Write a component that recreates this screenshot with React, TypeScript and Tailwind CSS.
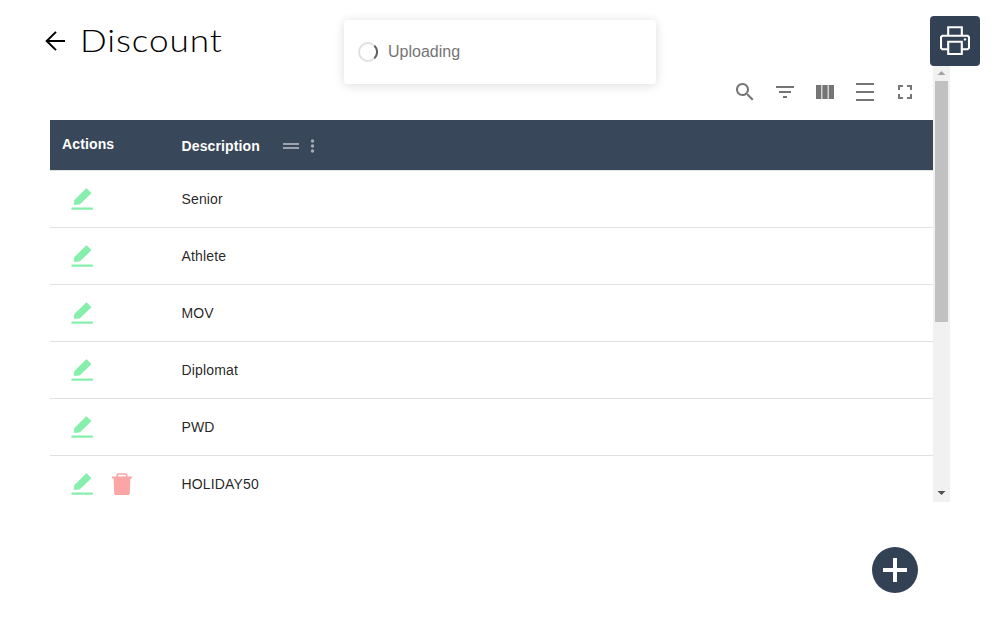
import React from "react";

const toolbarIcons = [
  "M15.5 14h-.79l-.28-.27C15.41 12.59 16 11.11 16 9.5 16 5.91 13.09 3 9.5 3S3 5.91 3 9.5 5.91 16 9.5 16c1.61 0 3.09-.59 4.23-1.57l.27.28v.79l5 4.99L20.49 19l-4.99-5zm-6 0C7.01 14 5 11.99 5 9.5S7.01 5 9.5 5 14 7.01 14 9.5 11.99 14 9.5 14z",
  "M10 18h4v-2h-4v2zM3 6v2h18V6H3zm3 7h12v-2H6v2z",
  "M14.67 5v14H9.33V5h5.34zm1 14H21V5h-5.33v14zm-7.34 0V5H3v14h5.33z",
  "M3 3h18v2H3zm0 16h18v2H3zm0-8h18v2H3z",
  "M7 14H5v5h5v-2H7v-3zm-2-4h2V7h3V5H5v5zm12 7h-3v2h5v-5h-2v3zM14 5v2h3v3h2V5h-5z",
];

const rows = [
  { name: "Senior", removable: false },
  { name: "Athlete", removable: false },
  { name: "MOV", removable: false },
  { name: "Diplomat", removable: false },
  { name: "PWD", removable: false },
  { name: "HOLIDAY50", removable: true },
];

function EditIcon() {
  return (
    <svg width="22" height="24" viewBox="0 0 22 24" className="text-[#86efac]" fill="currentColor">
      <path d="M4 12.8 15.4 1.6 20.1 6.2 8.7 17 3.4 17.6 3.4 14z" stroke="currentColor" strokeWidth="0.8" strokeLinejoin="round" />
      <rect x="0.3" y="20.6" width="21.7" height="2.2" rx="0.8" />
    </svg>
  );
}

function TrashIcon() {
  return (
    <svg width="20" height="24" viewBox="0 0 20 24" className="text-[#fca5a5]" fill="currentColor">
      <path d="M5.3 5V3Q5.3 2 6.3 2H13.7Q14.7 2 14.7 3V5" fill="none" stroke="currentColor" strokeWidth="1.7" />
      <rect x="0" y="4.6" width="20" height="2" rx="0.4" />
      <path d="M1.6 6H18.4L17.8 21.2Q17.7 22.9 16 22.9H4Q2.3 22.9 2.2 21.2z" />
    </svg>
  );
}

function PrinterIcon() {
  return (
    <svg width="30" height="30" viewBox="0 0 30 30" fill="none" stroke="currentColor" strokeWidth="2.1">
      <path d="M8.2 9.5V1.3H21.8V9.5" />
      <path d="M8.2 23.3H2.4L1 21.9V11.1L2.4 9.7H27.6L29 11.1V21.9L27.6 23.3H21.8" />
      <path d="M8.2 15.7H21.8V28H8.2z" />
      <circle cx="25" cy="13.4" r="1.2" fill="currentColor" stroke="none" />
    </svg>
  );
}

export default function App() {
  return (
    <main className="relative h-[625px] w-[1000px] overflow-hidden bg-white font-['Liberation_Sans',Arial,sans-serif]">
      <header className="flex h-16 items-start pl-[45px]">
        <svg width="20" height="20" viewBox="0 0 20 20" className="mt-[31px]" fill="none" stroke="#000" strokeWidth="2">
          <path d="M20 10H2M11 .9 1.7 10l9.3 9.1" />
        </svg>
        <h1 className="ml-[15px] mt-4 origin-left scale-x-110 font-['Lato',sans-serif] text-[32px] font-light leading-[48px] tracking-[0.8px] text-black">
          Discount
        </h1>
      </header>

      <section className="ml-[50px] flex h-[438px] w-[900px] overflow-hidden">
        <div className="w-[883px] shrink-0">
          <div className="flex h-14 items-center justify-end pr-2">
            {toolbarIcons.map((path) => (
              <button key={path} className="flex size-10 items-center justify-center text-[#757575]">
                <svg width="24" height="24" viewBox="0 0 24 24" fill="currentColor">
                  <path d={path} />
                </svg>
              </button>
            ))}
          </div>
          <div className="flex h-[51px] border-b border-[#e0e0e0] bg-[#39475a] text-sm font-bold leading-[21px] tracking-[0.13px] text-white">
            <div className="w-[131.5px] pl-3 pt-3.5">Actions</div>
            <div className="flex items-start">
              <span className="pt-4">Description</span>
              <svg width="18" height="8" viewBox="0 0 18 8" className="ml-[22px] mt-[22px]" fill="#9ca3ad">
                <path d="M1 1h16v2H1zM1 5h16v2H1z" />
              </svg>
              <svg width="5" height="16" viewBox="0 0 5 16" className="ml-2.5 mt-[18px]" fill="#a5acb5">
                <circle cx="2.5" cy="3" r="1.7" />
                <circle cx="2.5" cy="8" r="1.7" />
                <circle cx="2.5" cy="13" r="1.7" />
              </svg>
            </div>
          </div>
          {rows.map((row) => (
            <div key={row.name} className="flex h-[57px] items-center border-b border-[#e0e0e0]">
              <div className="flex w-[131.5px] gap-[19px] pl-[21px]">
                <EditIcon />
                {row.removable && <TrashIcon />}
              </div>
              <span className="text-sm leading-5 tracking-[0.15px] text-black/87">{row.name}</span>
            </div>
          ))}
        </div>
        <div className="flex w-[17px] shrink-0 flex-col items-center bg-[#f1f1f1]">
          <svg width="17" height="17" viewBox="0 0 17 17" fill="#a3a3a3">
            <path d="M4.5 11 8.5 7 12.5 11z" />
          </svg>
          <div className="h-[241px] w-[13px] bg-[#c1c1c1]" />
          <svg width="17" height="17" viewBox="0 0 17 17" className="mt-auto" fill="#505050">
            <path d="M4.5 6h8L8.5 10z" />
          </svg>
        </div>
      </section>

      <div className="absolute left-[344px] top-5 flex h-16 w-[312px] items-center rounded bg-white pl-3.5 text-base text-[#757575] shadow-[0_1px_10px_0_rgba(0,0,0,0.1),0_2px_15px_0_rgba(0,0,0,0.05)]">
        <svg width="20" height="20" viewBox="0 0 20 20" fill="none" strokeWidth="2">
          <circle cx="10" cy="10" r="9" stroke="#e0e0e0" />
          <path d="M16.4 3.6a9 9 0 0 1 0 12.8" stroke="#616161" />
        </svg>
        <span className="ml-2.5">Uploading</span>
      </div>

      <button className="absolute left-[930px] top-4 flex size-[50px] items-center justify-center rounded bg-[#334155] text-white">
        <PrinterIcon />
      </button>

      <button className="absolute left-[872px] top-[547px] flex size-[46px] items-center justify-center rounded-full bg-[#334155]">
        <svg width="24" height="24" viewBox="0 0 24 24" fill="#fff">
          <path d="M10 0h4v10h10v4H14v10h-4V14H0v-4h10z" />
        </svg>
      </button>
    </main>
  );
}
